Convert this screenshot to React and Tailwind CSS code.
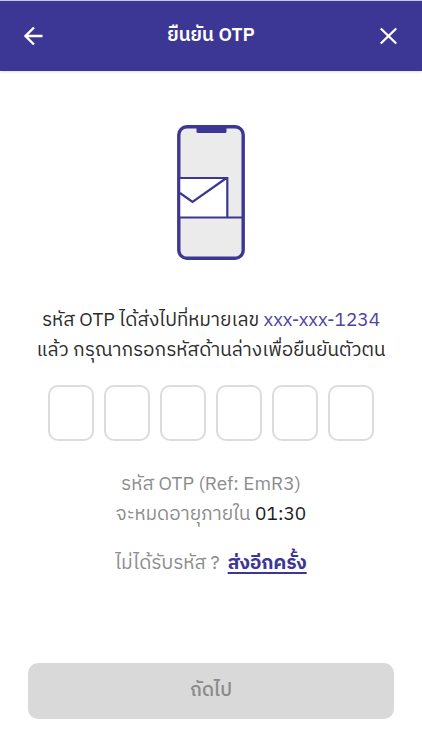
import { useRef, useState } from "react";

const OTP_LENGTH = 6;

function BackIcon() {
  return (
    <svg width="20" height="20" viewBox="0 0 20 20" fill="none" stroke="currentColor" strokeWidth="2.3" aria-hidden="true">
      <path d="M18.5 10H2M10 1.5L1.5 10L10 18.5" />
    </svg>
  );
}

function CloseIcon() {
  return (
    <svg width="20" height="20" viewBox="0 0 20 20" fill="none" stroke="currentColor" strokeWidth="2.3" aria-hidden="true">
      <path d="M2.8 2.5L18.2 17.5M18.2 2.5L2.8 17.5" />
    </svg>
  );
}

function PhoneMail() {
  return (
    <svg width="68" height="136" viewBox="0 0 68 136" fill="none" aria-hidden="true">
      <rect x="1.8" y="1.8" width="64.4" height="131.4" rx="8" fill="#ebebeb" stroke="#3c3794" strokeWidth="3.4" />
      <path d="M19.5 2H49.5V6.5Q49.5 8 48 8H21Q19.5 8 19.5 6.5Z" fill="#3c3794" />
      <rect x="3.5" y="53" width="47" height="39.5" fill="#fff" />
      <path d="M3 53H50.3V92.5M3 92.5H66M3 68L15.5 77L49.5 53" stroke="#3c3794" strokeWidth="2.2" />
    </svg>
  );
}

export default function App() {
  const [digits, setDigits] = useState(Array(OTP_LENGTH).fill(""));
  const inputs = useRef([]);

  const handleChange = (index, value) => {
    const digit = value.replace(/\D/g, "").slice(-1);
    setDigits((prev) => prev.map((d, i) => (i === index ? digit : d)));
    if (digit && index < OTP_LENGTH - 1) {
      inputs.current[index + 1].focus();
    }
  };

  const handleKeyDown = (index, e) => {
    if (e.key === "Backspace" && !digits[index] && index > 0) {
      inputs.current[index - 1].focus();
    }
  };

  const complete = digits.every((d) => d !== "");

  return (
    <div
      lang="th"
      className="flex min-h-screen flex-col bg-white font-['IBM_Plex_Sans_Thai','Noto_Sans_Thai','Noto_Sans',sans-serif] text-[19px] leading-[30px] text-[#2b2b2b]"
    >
      <header className="flex items-center justify-between border-t border-[#c9c9ec] bg-[#3c3794] px-6 py-5 text-white shadow-sm">
        <button type="button" aria-label="ย้อนกลับ">
          <BackIcon />
        </button>
        <h1 className="font-semibold">ยืนยัน OTP</h1>
        <button type="button" aria-label="ปิด">
          <CloseIcon />
        </button>
      </header>

      <main className="flex flex-1 flex-col items-center px-7 pt-[54px] pb-[31px] text-center">
        <PhoneMail />

        <p className="mt-[45px]">
          รหัส OTP ได้ส่งไปที่หมายเลข <span className="text-[#4a45a0]">xxx-xxx-1234</span>
          <br />
          แล้ว กรุณากรอกรหัสด้านล่างเพื่อยืนยันตัวตน
        </p>

        <div className="mt-[19px] flex justify-center gap-[10px]">
          {digits.map((digit, i) => (
            <input
              key={i}
              ref={(el) => {
                inputs.current[i] = el;
              }}
              type="text"
              inputMode="numeric"
              aria-label={`หลักที่ ${i + 1}`}
              value={digit}
              onChange={(e) => handleChange(i, e.target.value)}
              onKeyDown={(e) => handleKeyDown(i, e)}
              className="h-14 w-[46px] rounded-[10px] border-2 border-[#dcdcdc] text-center text-xl outline-none focus:border-[#3c3794]"
            />
          ))}
        </div>

        <p className="mt-[29px] text-[#8c8c8c]">
          รหัส OTP (Ref: EmR3)
          <br />
          จะหมดอายุภายใน <span className="text-[#1c1c1c]">01:30</span>
        </p>

        <p className="mt-[19px] flex items-center gap-2 text-[#8c8c8c]">
          ไม่ได้รับรหัส ?
          <button type="button" className="font-bold text-[#3c3794] underline decoration-2 underline-offset-3">
            ส่งอีกครั้ง
          </button>
        </p>

        <button
          type="submit"
          disabled={!complete}
          className="mt-auto h-14 w-full rounded-[10px] bg-[#3c3794] font-medium text-white disabled:bg-[#d9d9d9] disabled:text-[#8a8a8a]"
        >
          ถัดไป
        </button>
      </main>
    </div>
  );
}
